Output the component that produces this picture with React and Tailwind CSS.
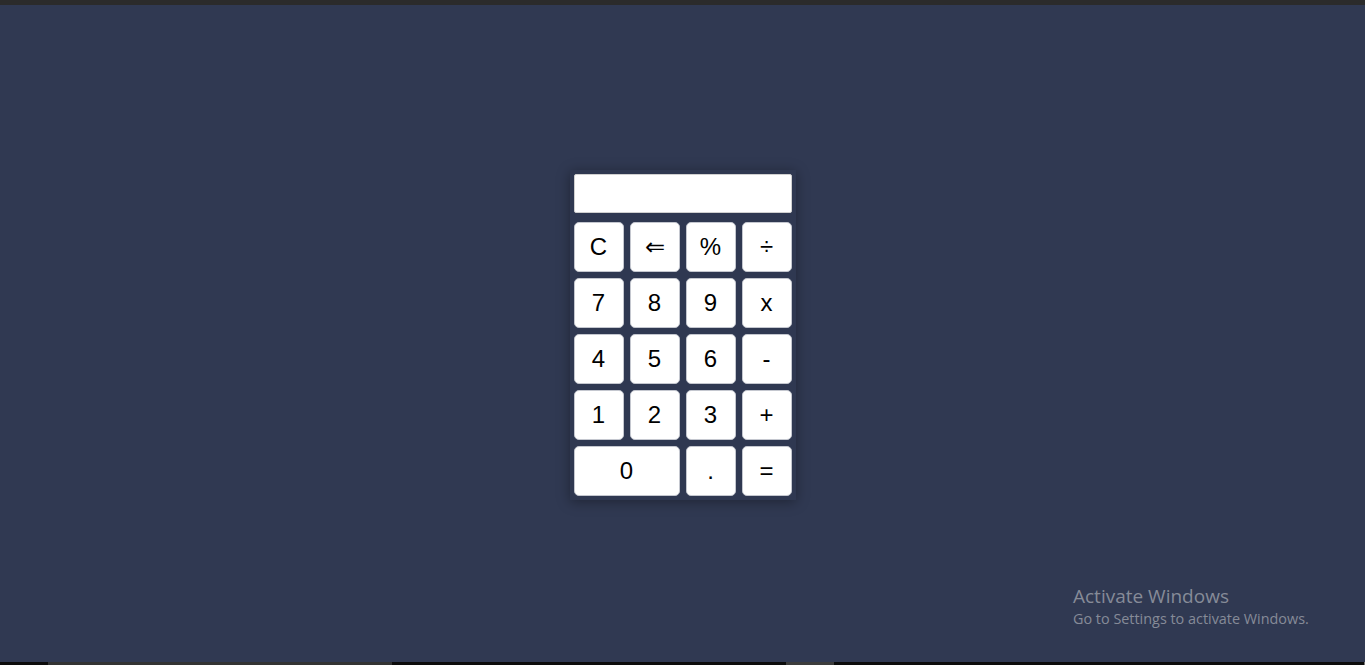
import React, { useState } from 'react';

const keys = [
  ['C', 'clear'], ['⇐', 'back'], ['%', 'op'], ['÷', 'op'],
  ['7'], ['8'], ['9'], ['x', 'op'],
  ['4'], ['5'], ['6'], ['-', 'op'],
  ['1'], ['2'], ['3'], ['+', 'op'],
  ['0', 'zero'], ['.'], ['=', 'eq'],
];

export default function App() {
  const [value, setValue] = useState('');

  const press = (label, kind) => {
    if (kind === 'clear') return setValue('');
    if (kind === 'back') return setValue((v) => v.slice(0, -1));
    if (kind === 'eq') {
      try {
        const expr = value.replace(/x/g, '*').replace(/÷/g, '/');
        // eslint-disable-next-line no-new-func
        setValue(String(Function('return (' + expr + ')')()));
      } catch (e) {
        setValue('Error');
      }
      return;
    }
    setValue((v) => v + label);
  };

  return (
    <div className="h-[665px] flex flex-col font-['Liberation_Sans',Arial,sans-serif] overflow-hidden">
      {/* window top edge */}
      <div className="h-[5px] bg-[#2b2b2b]"></div>

      <main className="flex-1 relative bg-[#303952] flex items-center justify-center">
        <div className="w-[226px] p-1 bg-[#2f3851] shadow-[0_2px_12px_rgba(0,0,0,0.35)] mt-[3px]">
          <input
            value={value}
            readOnly
            className="block w-full h-[39px] bg-white rounded-[2px] border border-[#d0d0d0] text-right px-2 text-2xl text-black outline-none"
          />
          <div className="grid grid-cols-4 gap-[6px] mt-[9px]">
            {keys.map(([label, kind]) => (
              <button
                key={label}
                onClick={() => press(label, kind)}
                className={`h-[50px] bg-white rounded-[5px] border border-[#c4c7cf] text-black text-[24px] leading-none flex items-center justify-center ${kind === 'zero' ? 'col-span-2' : ''}`}
              >
                {label}
              </button>
            ))}
          </div>
        </div>

        {/* windows watermark */}
        <div className="absolute left-[1073px] top-[580px] text-[#868b98] font-['Open_Sans','Noto_Sans',sans-serif] leading-tight">
          <div className="text-[19px]">Activate Windows</div>
          <div className="text-[14.4px] mt-[1px]">Go to Settings to activate Windows.</div>
        </div>
      </main>

      {/* taskbar strip */}
      <div className="h-[3px] flex bg-[#0c0c0c]">
        <div className="w-[48px]"></div>
        <div className="w-[344px] bg-[#333333]"></div>
        <div className="w-[394px]"></div>
        <div className="w-[48px] bg-[#3c3c3c]"></div>
        <div className="flex-1"></div>
        <div className="w-px bg-[#777]"></div>
      </div>
    </div>
  );
}
